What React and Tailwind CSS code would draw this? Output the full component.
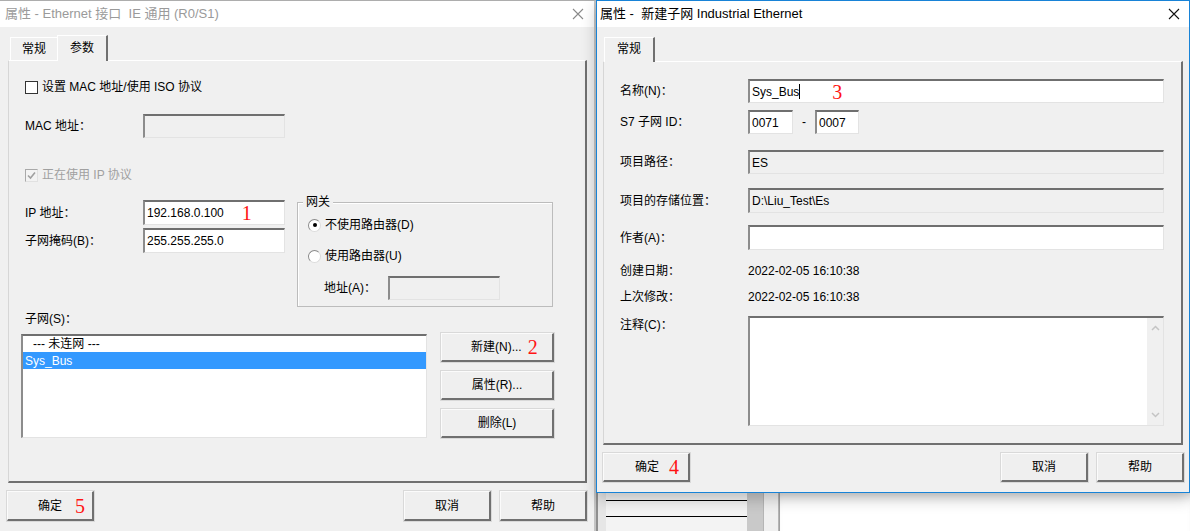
import React from 'react';

// Sunken edit box (classic Win32 look)
function Field({ className = '', disabled, children }) {
  return (
    <div
      className={`${disabled ? 'bg-[#f0f0f0]' : 'bg-white'} border-t-2 border-l-2 border-r border-b border-t-[#6f6f6f] border-l-[#8c8c8c] border-r-[#e3e3e3] border-b-[#e3e3e3] flex items-center pl-[2px] whitespace-nowrap ${className}`}
    >
      {children}
    </div>
  );
}

// Raised push button
function Btn({ className = '', children }) {
  return (
    <div
      className={`bg-[#efefef] border-t border-l border-b-2 border-r-2 border-t-[#fbfbfb] border-l-[#fbfbfb] border-b-[#707070] border-r-[#707070] shadow-[0_0_0_1px_#d9d9d9] flex items-center whitespace-nowrap ${className}`}
    >
      {children}
    </div>
  );
}

function Mark({ children, className = '' }) {
  return (
    <span className={`font-['Liberation_Serif',serif] text-[20px] leading-none text-[#ff1414] ${className}`}>
      {children}
    </span>
  );
}

function CloseX({ color }) {
  return (
    <svg width="12" height="12" viewBox="0 0 12 12">
      <path d="M1 1L11 11M11 1L1 11" stroke={color} strokeWidth="1.1" fill="none" />
    </svg>
  );
}

function Radio({ checked }) {
  return (
    <span className="w-[13px] h-[13px] rounded-full bg-white border border-t-[#8a8a8a] border-l-[#8a8a8a] border-r-[#dcdcdc] border-b-[#dcdcdc] flex items-center justify-center shrink-0">
      {checked && <span className="w-[4px] h-[4px] rounded-full bg-black" />}
    </span>
  );
}

function LeftDialog() {
  return (
    <div className="absolute left-0 top-0 w-[596px] h-[531px] bg-[#f0f0f0] border-t border-t-[#adadad] border-r-2 border-r-[#c4c4c4] flex flex-col">
      {/* Title bar (inactive) */}
      <div className="h-[26px] bg-white flex items-center justify-between pl-[5px] pr-[10px] shrink-0">
        <span className="text-[13px] text-[#9a9a9a]">属性 - Ethernet 接口&nbsp; IE 通用 (R0/S1)</span>
        <CloseX color="#8a8a8a" />
      </div>

      <div className="pl-[8px]">
        {/* Tabs */}
        <div className="mt-[8px] h-[25px] flex items-end pl-[2px]">
          <div className="w-[47px] h-[23px] border-t border-l border-t-white border-l-white flex items-center justify-center">
            常规
          </div>
          <div className="relative z-10 -mb-px w-[51px] h-[26px] bg-[#f0f0f0] border-t border-l border-r-2 border-t-white border-l-white border-r-[#707070] flex items-center justify-center pb-[2px]">
            参数
          </div>
        </div>

        {/* Tab panel */}
        <div className="w-[579px] h-[423px] border-t border-l border-r-2 border-b-2 border-t-white border-l-[#d6d6d6] border-r-[#707070] border-b-[#707070] flex flex-col">
          <div className="mt-[18px] h-[16px] pl-[16px] flex items-center gap-[4px]">
            <span className="w-[13px] h-[13px] bg-white border border-[#333]" />
            <span>设置 MAC 地址/使用 ISO 协议</span>
          </div>

          <div className="mt-[19px] pl-[16px] flex items-center">
            <span className="w-[118px]">MAC 地址：</span>
            <Field disabled className="w-[142px] h-[24px]" />
          </div>

          <div className="mt-[29px] h-[16px] pl-[16px] flex items-center gap-[4px]">
            <span className="w-[13px] h-[13px] bg-[#f3f3f3] border border-t-[#a9a9a9] border-l-[#a9a9a9] border-r-[#e1e1e1] border-b-[#e1e1e1] flex items-center justify-center">
              <svg width="9" height="9" viewBox="0 0 9 9">
                <path d="M1 4.5L3.5 7L8 1.5" stroke="#a0a0a0" strokeWidth="1.6" fill="none" />
              </svg>
            </span>
            <span className="text-[#a0a0a0]">正在使用 IP 协议</span>
          </div>

          {/* IP + gateway */}
          <div className="mt-[12px] pl-[16px] flex">
            <div className="w-[272px] pt-[5px] flex flex-col gap-[3px]">
              <div className="flex items-center">
                <span className="w-[118px]">IP 地址：</span>
                <Field className="w-[142px] h-[25px]">
                  <span>192.168.0.100</span>
                  <Mark className="ml-[18px]">1</Mark>
                </Field>
              </div>
              <div className="flex items-center">
                <span className="w-[118px]">子网掩码(B)：</span>
                <Field className="w-[142px] h-[25px]">255.255.255.0</Field>
              </div>
            </div>

            <div className="relative mt-[7px] w-[256px] h-[105px] border border-[#bcbcbc] shadow-[inset_1px_1px_0_#fff] flex flex-col pl-[10px]">
              <span className="absolute -top-[9px] left-[5px] bg-[#f0f0f0] px-[3px] leading-[16px]">网关</span>
              <div className="mt-[14px] h-[16px] flex items-center gap-[4px]">
                <Radio checked />
                <span>不使用路由器(D)</span>
              </div>
              <div className="mt-[15px] h-[16px] flex items-center gap-[4px]">
                <Radio />
                <span>使用路由器(U)</span>
              </div>
              <div className="mt-[12px] flex items-center pl-[16px]">
                <span className="w-[64px]">地址(A)：</span>
                <Field disabled className="w-[112px] h-[24px]" />
              </div>
            </div>
          </div>

          <div className="mt-[4px] h-[16px] pl-[16px] flex items-center">子网(S)：</div>

          <div className="mt-[6px] pl-[12px] flex">
            <div className="mt-[1px] w-[406px] h-[104px] bg-white border-t-2 border-l-2 border-r border-b border-t-[#6f6f6f] border-l-[#8c8c8c] border-r-[#e3e3e3] border-b-[#e3e3e3] flex flex-col">
              <div className="h-[16px] pl-[10px] flex items-center">--- 未连网 ---</div>
              <div className="h-[17px] bg-[#3399ff] text-white pl-[2px] flex items-center">Sys_Bus</div>
            </div>
            <div className="ml-[14px] w-[113px] flex flex-col gap-[9px]">
              <Btn className="h-[29px] pl-[29px]">
                <span>新建(N)...</span>
                <Mark className="ml-[6px]">2</Mark>
              </Btn>
              <Btn className="h-[29px] justify-center">属性(R)...</Btn>
              <Btn className="h-[29px] justify-center">删除(L)</Btn>
            </div>
          </div>
        </div>
      </div>

      {/* Dialog buttons */}
      <div className="mt-[8px] pl-[7px] pr-[7px] flex gap-[9px]">
        <Btn className="w-[87px] h-[30px] pl-[30px]">
          <span>确定</span>
          <Mark className="ml-[13px]">5</Mark>
        </Btn>
        <Btn className="ml-auto w-[87px] h-[30px] justify-center">取消</Btn>
        <Btn className="w-[87px] h-[30px] justify-center">帮助</Btn>
      </div>
    </div>
  );
}

function Row({ label, children, className = '' }) {
  return (
    <div className={`pl-[16px] flex items-center ${className}`}>
      <span className="w-[128px] shrink-0">{label}</span>
      {children}
    </div>
  );
}

function RightDialog() {
  return (
    <div className="absolute left-[596px] top-0 w-[594px] h-[493px] bg-[#f0f0f0] border border-[#1883d7] shadow-[0_6px_14px_rgba(0,0,0,0.22)] flex flex-col">
      <div className="h-[26px] bg-white flex items-center justify-between pl-[3px] pr-[9px] shrink-0">
        <span className="text-[13px] text-black">属性 -&nbsp; 新建子网 Industrial Ethernet</span>
        <CloseX color="#111" />
      </div>

      <div className="pl-[6px]">
        <div className="mt-[10px] h-[24px] flex items-end pl-[1px]">
          <div className="relative z-10 -mb-px w-[51px] h-[25px] bg-[#f0f0f0] border-t border-l border-r-2 border-t-white border-l-white border-r-[#707070] flex items-center justify-center pb-[2px]">
            常规
          </div>
        </div>

        <div className="w-[580px] h-[384px] border-t border-l border-r-2 border-b-2 border-t-white border-l-[#d6d6d6] border-r-[#707070] border-b-[#707070] flex flex-col">
          <Row label="名称(N)：" className="mt-[17px]">
            <Field className="w-[416px] h-[24px]">
              <span>Sys_Bus</span>
              <span className="w-px h-[15px] bg-black" />
              <Mark className="ml-[32px]">3</Mark>
            </Field>
          </Row>
          <Row label="S7 子网 ID：" className="mt-[7px]">
            <Field className="w-[45px] h-[24px]">0071</Field>
            <span className="w-[22px] text-center">-</span>
            <Field className="w-[44px] h-[24px]">0007</Field>
          </Row>
          <Row label="项目路径：" className="mt-[16px]">
            <Field disabled className="w-[416px] h-[24px]">ES</Field>
          </Row>
          <Row label="项目的存储位置：" className="mt-[14px]">
            <Field disabled className="w-[416px] h-[25px]">D:\Liu_Test\Es</Field>
          </Row>
          <Row label="作者(A)：" className="mt-[12px]">
            <Field className="w-[416px] h-[25px]" />
          </Row>
          <Row label="创建日期：" className="mt-[13px] h-[16px]">
            <span>2022-02-05 16:10:38</span>
          </Row>
          <Row label="上次修改：" className="mt-[10px] h-[16px]">
            <span>2022-02-05 16:10:38</span>
          </Row>
          <div className="mt-[11px] pl-[16px] flex items-start">
            <span className="w-[128px] leading-[16px] pt-[1px]">注释(C)：</span>
            <div className="w-[416px] h-[110px] bg-white border-t-2 border-l-2 border-r border-b border-t-[#6f6f6f] border-l-[#8c8c8c] border-r-[#e3e3e3] border-b-[#e3e3e3] flex justify-end">
              <div className="w-[16px] h-full bg-[#f0f0f0] flex flex-col items-center justify-between py-[7px]">
                <svg width="9" height="6" viewBox="0 0 9 6">
                  <path d="M1 5L4.5 1.5L8 5" stroke="#c4c4c4" strokeWidth="1.5" fill="none" />
                </svg>
                <svg width="9" height="6" viewBox="0 0 9 6">
                  <path d="M1 1L4.5 4.5L8 1" stroke="#c4c4c4" strokeWidth="1.5" fill="none" />
                </svg>
              </div>
            </div>
          </div>
        </div>
      </div>

      <div className="mt-[8px] pl-[6px] pr-[5px] flex gap-[9px]">
        <Btn className="w-[87px] h-[29px] pl-[31px]">
          <span>确定</span>
          <Mark className="ml-[10px]">4</Mark>
        </Btn>
        <Btn className="ml-auto w-[87px] h-[29px] justify-center">取消</Btn>
        <Btn className="w-[87px] h-[29px] justify-center">帮助</Btn>
      </div>
    </div>
  );
}

// Bits of other windows showing below the active dialog
function Backdrop() {
  return (
    <div className="absolute left-[596px] top-[493px] w-[594px] h-[38px] bg-white flex">
      <div className="w-[10px] h-full bg-[#e6e6e6] border-l-2 border-[#8f8f8f]" />
      <div className="w-[141px] h-full bg-[#f3f3f3] flex flex-col pt-[7px] gap-[15px]">
        <div className="h-px bg-black" />
        <div className="h-px bg-black" />
      </div>
      <div className="w-[16px] h-full bg-[#c9c9c9]" />
      <div className="w-[16px] h-full bg-[#f0f0f0] border-l border-r border-[#b5b5b5]" />
      <div className="flex-1 h-full bg-white border-l border-[#a0a0a0] shadow-[inset_0_8px_10px_-6px_rgba(0,0,0,0.15)]" />
    </div>
  );
}

export default function App() {
  return (
    <div className="relative w-[1190px] h-[531px] overflow-hidden bg-white text-[12px] text-black font-['Liberation_Sans','Noto_Sans_CJK_SC',sans-serif]">
      <LeftDialog />
      <Backdrop />
      <RightDialog />
    </div>
  );
}
